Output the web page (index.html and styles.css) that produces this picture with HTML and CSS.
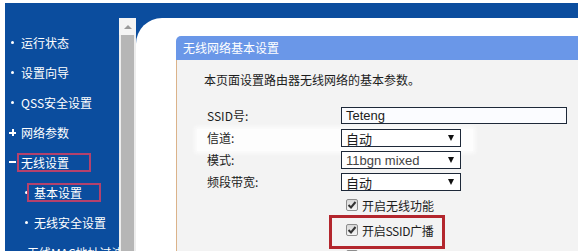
FILE: index.html
```html
<!DOCTYPE html>
<html lang="zh-CN">
<head>
    <meta charset="UTF-8">
    <meta name="viewport" content="width=device-width, initial-scale=1.0">
    <title>无线网络基本设置</title>
    <link rel="stylesheet" href="styles.css">
</head>
<body>
    <div class="frame">
        <div class="menu">
            <div class="item"><span class="bullet"><i class="dot"></i></span>运行状态</div>
            <div class="item"><span class="bullet"><i class="dot"></i></span>设置向导</div>
            <div class="item"><span class="bullet"><i class="dot"></i></span>QSS安全设置</div>
            <div class="item"><span class="bullet"><i class="plus"></i></span>网络参数</div>
            <div class="item"><span class="bullet"><i class="minus"></i></span><span class="mark mark-top">无线设置</span></div>
            <div class="item sub"><span class="bullet"><i class="dot"></i></span><span class="mark mark-sub">基本设置</span></div>
            <div class="item sub"><span class="bullet"><i class="dot"></i></span>无线安全设置</div>
            <div class="item sub"><span class="bullet"><i class="dot"></i></span>无线MAC地址过滤</div>
        </div>

        <div class="scrollbar">
            <div class="scroll-up"><i class="arrow-up"></i></div>
            <div class="scroll-thumb"></div>
        </div>

        <div class="content">
            <div class="panel">
                <div class="panel-title">无线网络基本设置</div>
                <div class="panel-body">
                    <p class="intro">本页面设置路由器无线网络的基本参数。</p>

                    <div class="form">
                        <div class="row">
                            <span class="label">SSID号:</span>
                            <div class="field">Teteng</div>
                        </div>
                        <div class="row blur">
                            <span class="label">信道:</span>
                            <div class="select"><span>自动</span><i class="arrow-down"></i></div>
                        </div>
                        <div class="row">
                            <span class="label">模式:</span>
                            <div class="select latin"><span>11bgn mixed</span><i class="arrow-down"></i></div>
                        </div>
                        <div class="row">
                            <span class="label">频段带宽:</span>
                            <div class="select"><span>自动</span><i class="arrow-down"></i></div>
                        </div>

                        <div class="check-row">
                            <span class="check"><svg width="10" height="10" viewBox="0 0 10 10"><path d="M1.5 5 L4 7.5 L8.5 2" fill="none" stroke="#333" stroke-width="2"/></svg></span>
                            <span>开启无线功能</span>
                        </div>
                        <div class="check-row highlight">
                            <span class="check"><svg width="10" height="10" viewBox="0 0 10 10"><path d="M1.5 5 L4 7.5 L8.5 2" fill="none" stroke="#333" stroke-width="2"/></svg></span>
                            <span class="ssid-text">开启SSID广播</span>
                        </div>
                        <div class="check-row last">
                            <span class="check"></span>
                        </div>
                    </div>
                </div>
            </div>
        </div>
    </div>
</body>
</html>
```

FILE: styles.css
```css
body {
    margin: 0;
    background: #fff;
    font-family: "Noto Sans CJK SC", "Liberation Sans", sans-serif;
    font-size: 12px;
    color: #1c1c1c;
    overflow: hidden;
}

.frame {
    display: flex;
    margin: 3px 0 0 5px;
    height: 248px;
    background: #0b4d9e;
}

/* left menu */

.menu {
    width: 114px;
    padding-top: 24px;
    overflow: hidden;
    color: #fff;
}

.item {
    display: flex;
    align-items: center;
    height: 30px;
    padding-left: 2px;
    white-space: nowrap;
}

.item.sub {
    padding-left: 16px;
}

.bullet {
    display: flex;
    align-items: center;
    justify-content: center;
    width: 10px;
    height: 10px;
    margin-right: 4px;
}

.item.sub .bullet {
    margin-right: 3px;
}

.dot {
    width: 3px;
    height: 3px;
    border-radius: 50%;
    background: #fff;
}

.plus {
    position: relative;
    width: 7px;
    height: 7px;
}

.plus::before,
.plus::after {
    content: "";
    position: absolute;
    background: #fff;
}

.plus::before {
    left: 0;
    top: 3px;
    width: 7px;
    height: 2px;
}

.plus::after {
    left: 3px;
    top: 0;
    width: 2px;
    height: 7px;
}

.minus {
    width: 7px;
    height: 2px;
    background: #fff;
}

.mark {
    display: inline-block;
    line-height: 15px;
    border: 2px solid #b4416c;
}

.mark-top {
    margin-left: -4px;
    padding: 0 20px 0 2px;
}

.mark-sub {
    margin-left: -7px;
    padding: 0 17px 0 5px;
}

/* scrollbar */

.scrollbar {
    display: flex;
    flex-direction: column;
    width: 17px;
    margin-top: 15px;
    padding: 0 2px;
    box-sizing: border-box;
    background: #ededed;
}

.scroll-up {
    display: flex;
    justify-content: center;
    align-items: center;
    height: 17px;
    margin: 0 -2px;
    background: #f4f4f4;
}

.arrow-up {
    width: 0;
    height: 0;
    border-left: 4px solid transparent;
    border-right: 4px solid transparent;
    border-bottom: 4px solid #9a9a9a;
}

.scroll-thumb {
    flex: 1;
    background: #b6b6b6;
}

/* content */

.content {
    flex: 1;
    margin-top: 15px;
    padding: 18px 0 0 40px;
    background: #fff;
    border-top-left-radius: 26px;
    overflow: hidden;
}

.panel {
    height: 100%;
}

.panel-title {
    height: 24px;
    line-height: 24px;
    padding-left: 7px;
    color: #fff;
    background: #6a97e8;
    border-top-left-radius: 5px;
}

.panel-body {
    height: 100%;
    padding-left: 27px;
    background: #f3f3f3;
    border-left: 1px solid #dbb38a;
}

.intro {
    margin: 0;
    padding-top: 12px;
    line-height: 16px;
}

.form {
    margin-top: 19px;
}

.row {
    display: flex;
    height: 22px;
}

.row.blur {
    width: 269px;
    margin-left: -7px;
    padding-left: 7px;
    background: #fdfdfd;
    box-shadow: 0 0 4px 2px #fdfdfd;
}

.label {
    width: 134px;
    padding-left: 3px;
    line-height: 18px;
}

.field {
    width: 226px;
    height: 17px;
    box-sizing: border-box;
    padding-left: 4px;
    line-height: 15px;
    border: 1px solid #1d2838;
    background: #fbfcff;
    font-family: "Liberation Sans", sans-serif;
    font-size: 13px;
}

.select {
    display: flex;
    align-items: center;
    justify-content: space-between;
    width: 120px;
    height: 18px;
    box-sizing: border-box;
    padding: 0 6px 0 4px;
    border: 1px solid #1d2838;
    background: #fff;
    font-size: 13px;
}

.select.latin {
    font-family: "Liberation Sans", sans-serif;
    color: #444;
}

.arrow-down {
    width: 0;
    height: 0;
    border-left: 3px solid transparent;
    border-right: 3px solid transparent;
    border-top: 6px solid #111;
}

.check-row {
    display: flex;
    align-items: center;
    gap: 4px;
    height: 20px;
    padding-left: 142px;
    white-space: nowrap;
}

.check {
    display: flex;
    align-items: center;
    justify-content: center;
    flex-shrink: 0;
    width: 12px;
    height: 12px;
    box-sizing: border-box;
    border: 1px solid #8d8d8d;
    border-radius: 2px;
    background: linear-gradient(#d9d9d9, #f5f5f5);
}

.check-row.highlight {
    width: 116px;
    height: 34px;
    box-sizing: border-box;
    margin-left: 125px;
    padding: 0 0 4px 14px;
    border: 3px solid #b3262d;
}

.ssid-text {
    letter-spacing: -0.3px;
}

.check-row.last {
    align-items: flex-start;
    height: 12px;
    padding-top: 1px;
}
```
